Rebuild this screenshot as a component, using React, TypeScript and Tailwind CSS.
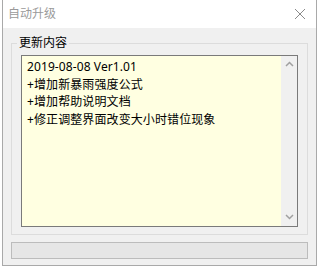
import React from 'react'

const lines = [
  '2019-08-08 Ver1.01',
  '+增加新暴雨强度公式',
  '+增加帮助说明文档',
  '+修正调整界面改变大小时错位现象',
]

const App: React.FC = () => {
  return (
    <div
      className="w-[320px] h-[276px] bg-white"
      style={{ fontFamily: '"Noto Sans", "Noto Sans CJK SC", sans-serif' }}
    >
      <div className="ml-[2px] w-[315px] h-[266px] border border-t-0 border-[#a9a9a9] flex flex-col bg-[#f0f0f0]">
        {/* title bar */}
        <div className="h-[28px] bg-white flex items-center justify-between pl-[5px] pr-[8px]">
          <span className="text-[12px] text-[#9a9a9a]">自动升级</span>
          <svg width="12" height="12" viewBox="0 0 12 12" className="mr-[2px]">
            <path d="M1 1L11 11M11 1L1 11" stroke="#8a8a8a" strokeWidth="1" />
          </svg>
        </div>

        {/* group box */}
        <div className="relative mt-[15px] ml-[8px] mr-[8px] h-[192px] border border-[#dcdcdc]">
          <span className="absolute left-[5px] -top-[10px] px-[2px] bg-[#f0f0f0] text-[12px] leading-[18px] text-black">
            更新内容
          </span>
          <div className="mt-[11px] ml-[9px] mr-[9px] h-[172px] border border-[#7a7a7a] flex">
            <div className="flex-1 bg-[#ffffe1] pt-[2px] pl-[5px] text-[12px] leading-[17.5px] tracking-[0.1px] text-black">
              {lines.map((l) => (
                <div key={l}>{l}</div>
              ))}
            </div>
            <div className="w-[16px] bg-[#f0f0f0] flex flex-col items-center justify-between pt-[5px] pb-[6px]">
              <svg width="9" height="6" viewBox="0 0 9 6">
                <path d="M1 5L4.5 1.5L8 5" stroke="#a0a0a0" strokeWidth="1.5" fill="none" />
              </svg>
              <svg width="9" height="6" viewBox="0 0 9 6">
                <path d="M1 1L4.5 4.5L8 1" stroke="#a0a0a0" strokeWidth="1.5" fill="none" />
              </svg>
            </div>
          </div>
        </div>

        {/* progress bar */}
        <div className="mt-[7px] ml-[8px] mr-[8px] h-[17px] bg-[#e6e6e6] border border-[#bcbcbc]" />
      </div>
    </div>
  )
}

export default App
